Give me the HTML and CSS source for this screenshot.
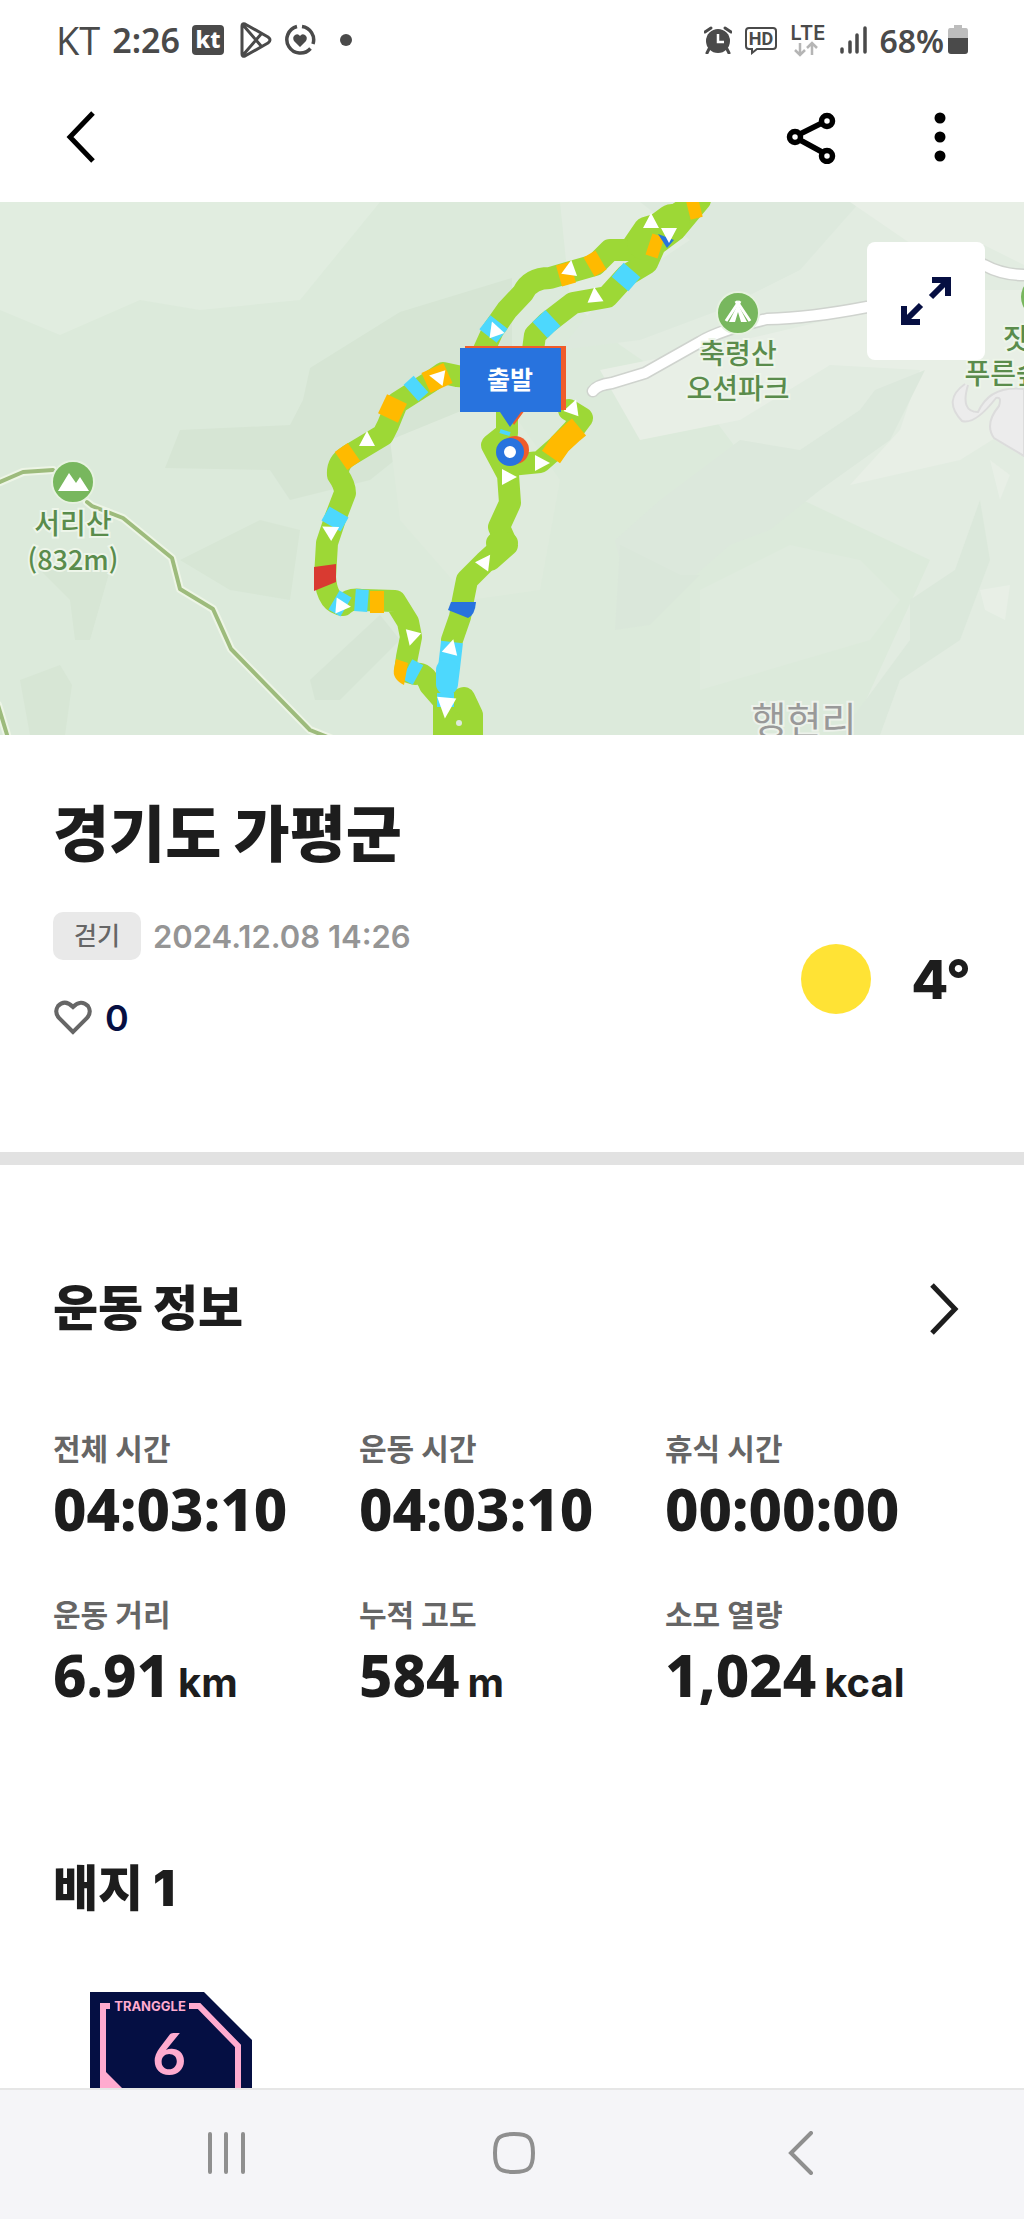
FILE: index.html
```
<!DOCTYPE html>
<html lang="ko">
<head>
  <meta charset="UTF-8" />
  <meta name="viewport" content="width=device-width, initial-scale=1.0"/>
  <title>경기도 가평군</title>
  <link rel="stylesheet" href="styles.css">
</head>
<body>
  <div class="status-bar">
    <div class="status-left">
      <span class="carrier">KT</span>
      <span class="clock">2:26</span>
      <span class="kt-icon">kt</span>
      <svg class="play-icon" width="32" height="36" viewBox="0 0 32 36" fill="none" stroke="#4a4a4a" stroke-width="3" stroke-linejoin="round">
        <path d="M2 4Q2 1 5 2L28 15Q32 18 28 21L5 34Q2 35 2 32ZM3 3L22 25M3 33L22 11"/>
      </svg>
      <svg width="32" height="32" viewBox="0 0 32 32">
        <path d="M18 2.5A13.500 13.500 0 0 1 29 20M26.500 24.500A13.500 13.500 0 1 1 13 2.500" fill="none" stroke="#4a4a4a" stroke-width="3.500"/>
        <path d="M16 23L10 17Q8 13 11 11Q14 9 16 12Q18 9 21 11Q24 13 22 17Z" fill="#4a4a4a"/>
      </svg>
      <span class="more-dot"></span>
    </div>
    <div class="status-right">
      <svg width="28" height="28" viewBox="0 0 28 28">
        <path d="M1 6L7 2M27 6L21 2M5 23L3 27M23 23L25 27" stroke="#4a4a4a" stroke-width="3" stroke-linecap="round"/>
        <circle cx="14" cy="15" r="12" fill="#4a4a4a"/>
        <path d="M14 8V16H20" fill="none" stroke="#fff" stroke-width="2.500"/>
      </svg>
      <svg width="34" height="29" viewBox="0 0 34 29">
        <path d="M5 2H29Q32 2 32 5V20Q32 23 29 23H13L8 27V23H5Q2 23 2 20V5Q2 2 5 2Z" fill="none" stroke="#4a4a4a" stroke-width="2"/>
        <text x="17" y="19" text-anchor="middle" class="hd-text">HD</text>
      </svg>
      <svg width="37" height="34" viewBox="0 0 37 34">
        <text x="18" y="17" text-anchor="middle" class="lte-text">LTE</text>
        <path d="M10 20V32M5 27L10 32L15 27M22 32V20M17 25L22 20L27 25" fill="none" stroke="#b5b5b5" stroke-width="2.500"/>
      </svg>
      <svg width="28" height="28" viewBox="0 0 28 28" stroke="#4a4a4a" stroke-width="3.500" stroke-linecap="round">
        <path d="M3 23V26M11 16V26M18 9V26M26 2V26"/>
      </svg>
      <span class="battery-text">68%</span>
      <svg class="battery-icon" width="20" height="30" viewBox="0 0 20 30">
        <path d="M6 0H14V3H18Q20 3 20 6V14H0V6Q0 3 2 3H6Z" fill="#bdbdbd"/>
        <path d="M0 13H20V26Q20 29 17 29H3Q0 29 0 26Z" fill="#4a4a4a"/>
      </svg>
    </div>
  </div>

  <header class="toolbar">
    <button class="icon-btn" aria-label="뒤로">
      <svg width="30" height="54" viewBox="0 0 30 54" fill="none" stroke="#000" stroke-width="5"><path d="M27 3L4 27L27 51"/></svg>
    </button>
    <div class="toolbar-actions">
      <button class="icon-btn" aria-label="공유">
        <svg width="50" height="54" viewBox="0 0 50 54" fill="none" stroke="#000" stroke-width="5.500">
          <path d="M14 24L36 13M14 30L36 42"/>
          <circle cx="9" cy="27" r="5.500"/><circle cx="41" cy="11" r="5.500"/><circle cx="41" cy="46" r="5.500"/>
        </svg>
      </button>
      <button class="icon-btn" aria-label="더보기">
        <svg width="12" height="50" viewBox="0 0 12 50"><circle cx="6" cy="6" r="5.500"/><circle cx="6" cy="25" r="5.500"/><circle cx="6" cy="44" r="5.500"/></svg>
      </button>
    </div>
  </header>

  <main class="content">
    <section class="map">
      <svg class="map-canvas" viewBox="0 202 1024 533">
        <defs>
          <path id="arrow" d="M0 -9L8 6H-8Z" fill="#fff"/>
        </defs>
        <rect y="202" width="1024" height="533" fill="#dceadb"/>

        <!-- terrain -->
        <g>
          <path d="M0 202H380L300 300L200 310L140 300L60 335L0 310Z" fill="#e1ede0"/>
          <path d="M512 278L400 312L310 368L303 400L290 425L180 430L165 468L270 470L290 500L370 480L420 440L512 400Z" fill="#d6e5d4"/>
          <path d="M390 440L500 395L560 480L540 590L470 600L400 520Z" fill="#dfebdd"/>
          <path d="M180 560L260 520L300 530L290 600L230 590Z" fill="#d7e6d5"/>
          <path d="M310 680L380 615L400 640L340 700L315 700Z" fill="#d6e5d5"/>
          <path d="M40 570H110L90 640L75 640L70 600ZM20 680L60 665L72 685L65 735H30Z" fill="#d7e6d5"/>
          <path d="M560 202H1024V735H850L930 560L760 480L700 400L620 345L570 300Z" fill="#e2ece1"/>
          <path d="M640 202H860L800 270L720 310L640 340L560 350L600 300L690 240Z" fill="#dde9dd"/>
          <path d="M600 370L700 350L870 310L984 290L1024 290V420L960 460L850 485L900 430L920 370L830 365L740 420L640 440Z" fill="#e8efe6"/>
          <path d="M875 390L925 370L890 440L820 490L770 530L730 545L690 580L620 560L615 540L660 500L740 440L800 450L860 410Z" fill="#dce8dc"/>
          <path d="M620 545L680 575H700L650 625L615 630Z" fill="#dae7da"/>
          <path d="M700 590L790 545L860 560L900 600L870 640L700 690Z" fill="#dfebde"/>
          <path d="M980 500L990 560L960 640L900 680L880 735H840L910 640V600L955 570Z" fill="#dbe8db"/>
          <path d="M980 590L1010 585L1005 620L985 610ZM990 460L1010 475L1000 500Z" fill="#e8efe6"/>
          <path d="M850 202H1024V265L984 245L920 250Z" fill="#e8efe6"/>
        </g>

        <!-- roads -->
        <path d="M965 384Q942 400 962 421Q975 425 996 398Q1002 396 999 406Q984 424 994 438L1024 456V389Q990 385 978 412Q960 412 968 385" fill="#ececec" stroke="#dcdcdc" stroke-width="2"/>
        <g fill="none" stroke-linecap="round" stroke-linejoin="round">
          <path d="M593 391Q597 385 612 383L645 373L700 342Q720 330 767 319Q810 318 867 307M950 250L984 265Q1004 276 1030 275" stroke="#cfd3ce" stroke-width="13"/>
          <path d="M593 391Q597 385 612 383L645 373L700 342Q720 330 767 319Q810 318 867 307M950 250L984 265Q1004 276 1030 275" stroke="#fff" stroke-width="10"/>
          <path d="M0 482L23 472L53 470M87 502L92 506L123 518L172 558L180 589L213 609L231 649L310 730L330 738M-2 705L8 738" stroke="#edf5e6" stroke-width="8"/>
          <path d="M0 482L23 472L53 470M87 502L92 506L123 518L172 558L180 589L213 609L231 649L310 730L330 738M-2 705L8 738" stroke="#9dbb7c" stroke-width="4"/>
        </g>

        <!-- track -->
        <g fill="none" stroke="#9dd836" stroke-width="22" stroke-linejoin="round" stroke-linecap="round">
          <path d="M470 377L457 376L443 373L430 382L397 403L388 425L383 435L348 456Q337 463 338 475Q345 485 345 493L335 519L327 543L325 577Q327 603 343 605Q350 598 362 600L395 601L408 622L411 637L407 657L405 671L415 674Q425 672 430 685L443 700"/>
          <path d="M484 350L493 330L507 310L523 293Q530 278 550 278L567 273L595 265L610 250L630 250L645 228L665 222L688 207L700 195"/>
          <path d="M533 350L535 335L547 323L573 303L607 297L627 275L647 263L655 245L675 230L700 200"/>
          <path d="M645 242L672 222" stroke-width="36"/>
          <path d="M507 410V433L492 445L508 475L510 503L499 527L506 543L485 562L467 580L463 600L460 617L452 640"/>
          <path d="M569 410L582 418L573 430L557 447L540 462L510 465"/>
          <path d="M497 543H507M507 545L490 560"/>
          <path d="M444 706V735H472V715L464 698Z" fill="#9dd836"/>
        </g>
        <g fill="none" stroke-width="22">
          <g stroke="#ffba00">
            <path d="M448 373L426 383"/>
            <path d="M397 399L388 418"/>
            <path d="M354 452L341 461"/>
            <path d="M370 602H384"/>
            <path d="M559 276L573 272"/>
            <path d="M589 267L601 260"/>
            <path d="M649 244L661 248"/>
            <path d="M688 209L700 206"/>
            <path d="M579 427L573 432L560 444L551 457" stroke-linejoin="round"/>
          </g>
          <g stroke="#4dd8fd">
            <path d="M421 384L411 393"/>
            <path d="M339 512L331 526"/>
            <path d="M334 600L346 607"/>
            <path d="M355 600L368 601"/>
            <path d="M488 336L499 322"/>
            <path d="M540 330L553 318"/>
            <path d="M620 284L632 270"/>
            <path d="M407 669L418 675"/>
            <path d="M452 642L449 668L447 684"/>
            <path d="M447 670V684" stroke-linecap="round"/>
            <path d="M437 700H454" stroke-width="14"/>
            <path d="M500 431L510 434" stroke-width="4"/>
          </g>
        </g>
        <path d="M396 659L408 663L404 685Q392 679 394 669Z" fill="#ffba00"/>
        <path d="M314 567L336 564V582L314 591Z" fill="#d93a31"/>
        <path d="M451 602H476Q475 615 468 618L448 610Z" fill="#2873de"/>
        <path d="M658 234L674 240L667 248Z" fill="#2873de"/>
        <circle cx="459" cy="723" r="3" fill="#dceadb"/>

        <!-- direction marks -->
        <use href="#arrow" transform="translate(367 440)"/>
        <use href="#arrow" transform="translate(438 377) rotate(-80)"/>
        <use href="#arrow" transform="translate(495 330) rotate(-20)"/>
        <use href="#arrow" transform="translate(570 269) rotate(8)"/>
        <use href="#arrow" transform="translate(595 296) rotate(-5)"/>
        <use href="#arrow" transform="translate(651 222)"/>
        <use href="#arrow" transform="translate(669 234) rotate(180)"/>
        <use href="#arrow" transform="translate(573 408) rotate(20)"/>
        <use href="#arrow" transform="translate(541 463) rotate(90)"/>
        <use href="#arrow" transform="translate(508 477) rotate(90)"/>
        <use href="#arrow" transform="translate(485 562) rotate(35)"/>
        <use href="#arrow" transform="translate(330 531) rotate(-60)"/>
        <use href="#arrow" transform="translate(342 606) rotate(95)"/>
        <use href="#arrow" transform="translate(412 637) rotate(-165)"/>
        <use href="#arrow" transform="translate(451 648) rotate(15)"/>
        <use href="#arrow" transform="translate(446 706) rotate(185) scale(1.200 1.400)"/>

        <!-- places -->
        <g>
          <circle cx="73" cy="482" r="21" fill="#78b75e" stroke="#e6f2e0" stroke-width="2"/>
          <path d="M58 491L69 473L76 483L80 477L89 491Z" fill="#fff"/>
          <text x="73" y="534" class="place">서리산</text>
          <text x="73" y="570" class="place place-height">(832m)</text>
          <circle cx="738" cy="313" r="21" fill="#78b75e" stroke="#e6f2e0" stroke-width="2"/>
          <path d="M738 304L747 322H741L738 312L735 322H729Z" fill="#fff"/>
          <path d="M736 301L738 305L740 301M738 303L726 321M738 303L750 321" fill="none" stroke="#fff" stroke-width="3"/>
          <text x="738" y="364" class="place">축령산</text>
          <text x="738" y="399" class="place">오션파크</text>
          <circle cx="1042" cy="297" r="21" fill="#78b75e"/>
          <text x="1042" y="349" class="place">잣향기</text>
          <text x="1016" y="384" class="place">푸른숲길</text>
          <text x="804" y="734" class="town">행현리</text>
        </g>

        <!-- start flag -->
        <circle cx="515" cy="450" r="14" fill="#f05c2b"/>
        <path d="M465 346H566V410H525L514 425L505 410H465Z" fill="#f05c2b"/>
        <path d="M460 348H561V412H521L510 427L500 412H460Z" fill="#2873de"/>
        <text x="510" y="389" class="flag">출발</text>
        <circle cx="510" cy="452" r="10" fill="#fff" stroke="#2873de" stroke-width="8"/>
      </svg>
      <button class="expand-btn" aria-label="지도 확대">
        <svg width="50" height="50" viewBox="0 0 50 50" fill="none" stroke="#060f42" stroke-width="6">
          <path d="M31 4H47V20M46 5L30 21M3 30V46H19M4 45L20 29"/>
        </svg>
      </button>
    </section>

    <section class="summary">
      <div>
        <h1>경기도 가평군</h1>
        <div class="meta">
          <span class="chip">걷기</span>
          <time>2024.12.08 14:26</time>
        </div>
        <button class="like">
          <svg width="40" height="36" viewBox="0 0 40 36" fill="none" stroke="#666" stroke-width="4"><path d="M20 32L6 18Q1 12 5 6Q12 -1 20 7Q28 -1 35 6Q39 12 34 18Z"/></svg>
          <span>0</span>
        </button>
      </div>
      <div class="weather">
        <span class="sun"></span>
        <span>4°</span>
      </div>
    </section>

    <section class="workout">
      <a href="#" class="section-head">
        <h2>운동 정보</h2>
        <svg width="30" height="54" viewBox="0 0 30 54" fill="none" stroke="#1d1d1d" stroke-width="5"><path d="M3 3L26 27L3 51"/></svg>
      </a>
      <dl class="stats">
        <div><dt>전체 시간</dt><dd>04:03:10</dd></div>
        <div><dt>운동 시간</dt><dd>04:03:10</dd></div>
        <div><dt>휴식 시간</dt><dd>00:00:00</dd></div>
        <div><dt>운동 거리</dt><dd>6.91<small>km</small></dd></div>
        <div><dt>누적 고도</dt><dd>584<small>m</small></dd></div>
        <div><dt>소모 열량</dt><dd>1,024<small>kcal</small></dd></div>
      </dl>
    </section>

    <section class="badges">
      <h2>배지 1</h2>
      <svg class="badge" width="162" height="180" viewBox="0 0 162 180">
        <path d="M0 0H114L162 48V180H48L0 132Z" fill="#050f43"/>
        <path d="M20 14H13V166M99 14H109L148 54V166" fill="none" stroke="#ffabcf" stroke-width="6"/>
        <path d="M10 74L55 119V166H10Z" fill="#ffabcf"/>
        <text x="60" y="19" class="badge-brand">TRANGGLE</text>
        <text x="79" y="83" class="badge-num">6</text>
        <text x="126" y="109" class="badge-unit">KM</text>
      </svg>
    </section>
  </main>

  <nav class="nav-bar">
    <button class="icon-btn" aria-label="최근 앱">
      <svg width="40" height="44" viewBox="0 0 40 44" stroke="#8f8f8f" stroke-width="4" stroke-linecap="round"><path d="M4 3V41M20 3V41M37 3V41"/></svg>
    </button>
    <button class="icon-btn" aria-label="홈">
      <svg width="44" height="44" viewBox="0 0 44 44" fill="none" stroke="#8f8f8f" stroke-width="4"><path d="M22 3C37 3 41 7 41 22S37 41 22 41S3 37 3 22S7 3 22 3Z"/></svg>
    </button>
    <button class="icon-btn" aria-label="이전">
      <svg width="40" height="44" viewBox="0 0 40 44" fill="none" stroke="#8f8f8f" stroke-width="4" stroke-linecap="round"><path d="M30 2L10 22L30 42"/></svg>
    </button>
  </nav>
</body>
</html>
```

FILE: styles.css
```
* {
  box-sizing: border-box;
}

body {
  margin: 0;
  height: 100vh;
  display: flex;
  flex-direction: column;
  background: #fff;
  color: #1d1d1d;
  font-family: Inter, "Noto Sans CJK KR", sans-serif;
}

button {
  background: none;
  border: none;
  padding: 0;
  font: inherit;
  color: inherit;
  cursor: pointer;
}

svg {
  display: block;
}

h1, h2, dl, dd {
  margin: 0;
}

.icon-btn {
  display: flex;
  align-items: center;
  justify-content: center;
}

/* status bar */
.status-bar {
  display: flex;
  flex-shrink: 0;
  justify-content: space-between;
  align-items: center;
  height: 80px;
  padding: 0 56px;
  color: #4a4a4a;
}

.status-left,
.status-right {
  display: flex;
  align-items: center;
  gap: 12px;
}

.carrier {
  font-family: "Open Sans", sans-serif;
  font-size: 38px;
  font-weight: 400;
}

.clock,
.battery-text {
  font-family: "Noto Sans", sans-serif;
  font-size: 34px;
  font-weight: 600;
}

.battery-text {
  font-size: 32px;
}

.kt-icon {
  width: 32px;
  height: 30px;
  border-radius: 4px;
  background: #4a4a4a;
  color: #fff;
  font-family: "Noto Sans", sans-serif;
  font-size: 23px;
  font-weight: 800;
  line-height: 28px;
  text-align: center;
}

.play-icon {
  margin-left: 4px;
}

.more-dot {
  width: 12px;
  height: 12px;
  margin-left: 12px;
  border-radius: 50%;
  background: #4a4a4a;
}

.hd-text {
  font-family: Roboto, sans-serif;
  font-size: 18px;
  font-weight: 700;
  fill: #4a4a4a;
}

.lte-text {
  font-family: Inter, sans-serif;
  font-size: 20px;
  font-weight: 600;
  fill: #4a4a4a;
}

.battery-icon {
  margin-left: -8px;
}

/* toolbar */
.toolbar {
  display: flex;
  flex-shrink: 0;
  justify-content: space-between;
  align-items: center;
  height: 122px;
  padding: 0 78px 8px 66px;
}

.toolbar-actions {
  display: flex;
  align-items: center;
  gap: 98px;
}

.content {
  flex: 1;
  min-height: 0;
  overflow-y: auto;
  scrollbar-width: none;
}

/* map */
.map {
  position: relative;
}

.map-canvas {
  width: 100%;
  height: auto;
}

.place,
.town,
.flag {
  font-family: "Noto Sans CJK KR", sans-serif;
  text-anchor: middle;
}

.place {
  font-size: 28px;
  font-weight: 500;
  fill: #5a8c4c;
  stroke: #edf5e9;
  stroke-width: 4px;
  paint-order: stroke;
}

.place-height {
  font-size: 27px;
}

.town {
  font-size: 38px;
  fill: #999;
  stroke: #edf2eb;
  stroke-width: 4px;
  paint-order: stroke;
}

.flag {
  font-size: 25px;
  font-weight: 700;
  fill: #fff;
}

.expand-btn {
  position: absolute;
  top: 40px;
  right: 39px;
  width: 118px;
  height: 118px;
  display: flex;
  align-items: center;
  justify-content: center;
  background: #fff;
  border-radius: 8px;
}

/* summary */
.summary {
  display: flex;
  justify-content: space-between;
  align-items: flex-end;
  padding: 64px 53px 112px;
  border-bottom: 13px solid #e2e2e2;
}

h1 {
  font-size: 61px;
  font-weight: 900;
  line-height: 72px;
}

.meta {
  display: flex;
  align-items: center;
  gap: 12px;
  margin-top: 41px;
}

.chip {
  padding: 0 21px;
  border-radius: 10px;
  background: #e9e9e9;
  color: #666;
  font-size: 25px;
  font-weight: 500;
  line-height: 48px;
}

time {
  color: #959595;
  font-size: 31px;
  font-weight: 600;
}

.like {
  display: flex;
  align-items: center;
  gap: 12px;
  margin-top: 36px;
  color: #060f42;
  font-size: 36px;
  font-weight: 600;
  line-height: 44px;
}

.weather {
  display: flex;
  align-items: center;
  gap: 40px;
  padding-bottom: 26px;
  font-size: 54px;
  font-weight: 800;
}

.sun {
  width: 70px;
  height: 70px;
  border-radius: 50%;
  background: #ffe335;
}

/* workout */
.workout {
  padding: 108px 53px 0;
}

.section-head {
  display: flex;
  justify-content: space-between;
  align-items: center;
  padding-right: 12px;
  color: inherit;
  text-decoration: none;
}

h2 {
  font-size: 49px;
  font-weight: 900;
  line-height: 72px;
}

.stats {
  display: grid;
  grid-template-columns: repeat(3, 1fr);
  row-gap: 50px;
  margin-top: 82px;
}

dt {
  color: #666;
  font-size: 30px;
  font-weight: 700;
  line-height: 44px;
}

dd {
  margin-top: 4px;
  font-family: "Noto Sans", sans-serif;
  font-size: 58px;
  font-weight: 800;
  line-height: 68px;
  white-space: nowrap;
}

dd small {
  margin-left: 8px;
  font-family: Inter, sans-serif;
  font-size: 40px;
  font-weight: 700;
}

/* badges */
.badges {
  padding: 136px 53px 0;
}

.badge {
  margin: 67px 0 40px 37px;
}

.badge-brand,
.badge-num,
.badge-unit {
  font-family: Inter, sans-serif;
  font-weight: 700;
  text-anchor: middle;
  fill: #ffabcf;
}

.badge-brand {
  font-size: 13px;
}

.badge-num {
  font-family: Lato, sans-serif;
  font-size: 58px;
}

.badge-unit {
  font-size: 18px;
}

/* navigation */
.nav-bar {
  display: flex;
  flex-shrink: 0;
  justify-content: space-between;
  align-items: center;
  height: 131px;
  padding: 0 203px 4px 206px;
  background: #f5f5f8;
  border-top: 2px solid #e6e6e6;
}
```
